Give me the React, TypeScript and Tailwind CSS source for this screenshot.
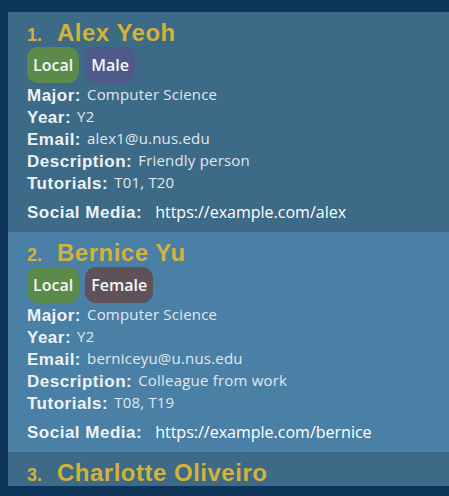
import React from "react";

type Person = {
  idx: number;
  name: string;
  tags: { label: string; color: string }[];
  major: string;
  year: string;
  email: string;
  desc: string;
  tutorials: string;
  social: string;
  bg: string;
};

const people: Person[] = [
  {
    idx: 1,
    name: "Alex Yeoh",
    tags: [
      { label: "Local", color: "bg-[#5b8a4b]" },
      { label: "Male", color: "bg-[#4f5a8b]" },
    ],
    major: "Computer Science",
    year: "Y2",
    email: "alex1@u.nus.edu",
    desc: "Friendly person",
    tutorials: "T01, T20",
    social: "https://example.com/alex",
    bg: "bg-[#3c6a87]",
  },
  {
    idx: 2,
    name: "Bernice Yu",
    tags: [
      { label: "Local", color: "bg-[#5b8a4b]" },
      { label: "Female", color: "bg-[#5e5159]" },
    ],
    major: "Computer Science",
    year: "Y2",
    email: "berniceyu@u.nus.edu",
    desc: "Colleague from work",
    tutorials: "T08, T19",
    social: "https://example.com/bernice",
    bg: "bg-[#4a80a5]",
  },
];

const labelCls =
  "font-['Liberation_Sans',Arial,sans-serif] font-bold text-[17px] leading-[22px] tracking-[0.5px] text-[#eef2f5] whitespace-nowrap";
const valueCls =
  "font-['Open_Sans',sans-serif] text-[15px] leading-[19px] tracking-[0.2px] text-[#e0e8ee] whitespace-nowrap";

function Row({ label, value }: { label: string; value: string }) {
  return (
    <div className="flex items-start gap-[6px] h-[22px]">
      <span className={labelCls}>{label}</span>
      <span className={valueCls}>{value}</span>
    </div>
  );
}

function Header({ idx, name }: { idx: number; name: string }) {
  return (
    <div className="flex items-baseline h-[30px] font-['Liberation_Sans',Arial,sans-serif] font-bold text-[#d3b23b] whitespace-nowrap">
      <span className="text-[18px] leading-[30px] w-[30px]">{idx}.</span>
      <span className="text-[24px] leading-[30px] tracking-[0.5px]">{name}</span>
    </div>
  );
}

function Card({ p }: { p: Person }) {
  return (
    <div className={`${p.bg} shrink-0 h-[220px] pl-[19px] pt-[6px] pb-[9px] flex flex-col`}>
      <Header idx={p.idx} name={p.name} />
      <div className="flex gap-[6px] mt-[-1px] h-[36px]">
        {p.tags.map((t) => (
          <div
            key={t.label}
            className={`${t.color} h-[36px] px-[6px] rounded-[11px] flex items-center font-['Open_Sans',sans-serif] font-semibold text-[16px] text-[#f5f5f5]`}
          >
            {t.label}
          </div>
        ))}
      </div>
      <div className="mt-[2px] flex flex-col">
        <Row label="Major:" value={p.major} />
        <Row label="Year:" value={p.year} />
        <Row label="Email:" value={p.email} />
        <Row label="Description:" value={p.desc} />
        <Row label="Tutorials:" value={p.tutorials} />
        <div className="flex items-baseline gap-[13px] h-[22px] mt-[6px]">
          <span className={labelCls}>Social Media:</span>
          <span className="font-['Open_Sans',sans-serif] text-[16px] leading-[22px] text-white whitespace-nowrap">
            {p.social}
          </span>
        </div>
      </div>
    </div>
  );
}

export default function App() {
  return (
    <div className="w-[449px] h-[496px] bg-[#0e3459] overflow-hidden pt-[12px] pl-[8px]">
      <div className="h-[474px] overflow-hidden flex flex-col">
        {people.map((p) => (
          <Card key={p.idx} p={p} />
        ))}
        <div className="bg-[#3c6a87] shrink-0 h-[34px] pl-[19px] pt-[6px] overflow-hidden">
          <Header idx={3} name="Charlotte Oliveiro" />
        </div>
      </div>
    </div>
  );
}
